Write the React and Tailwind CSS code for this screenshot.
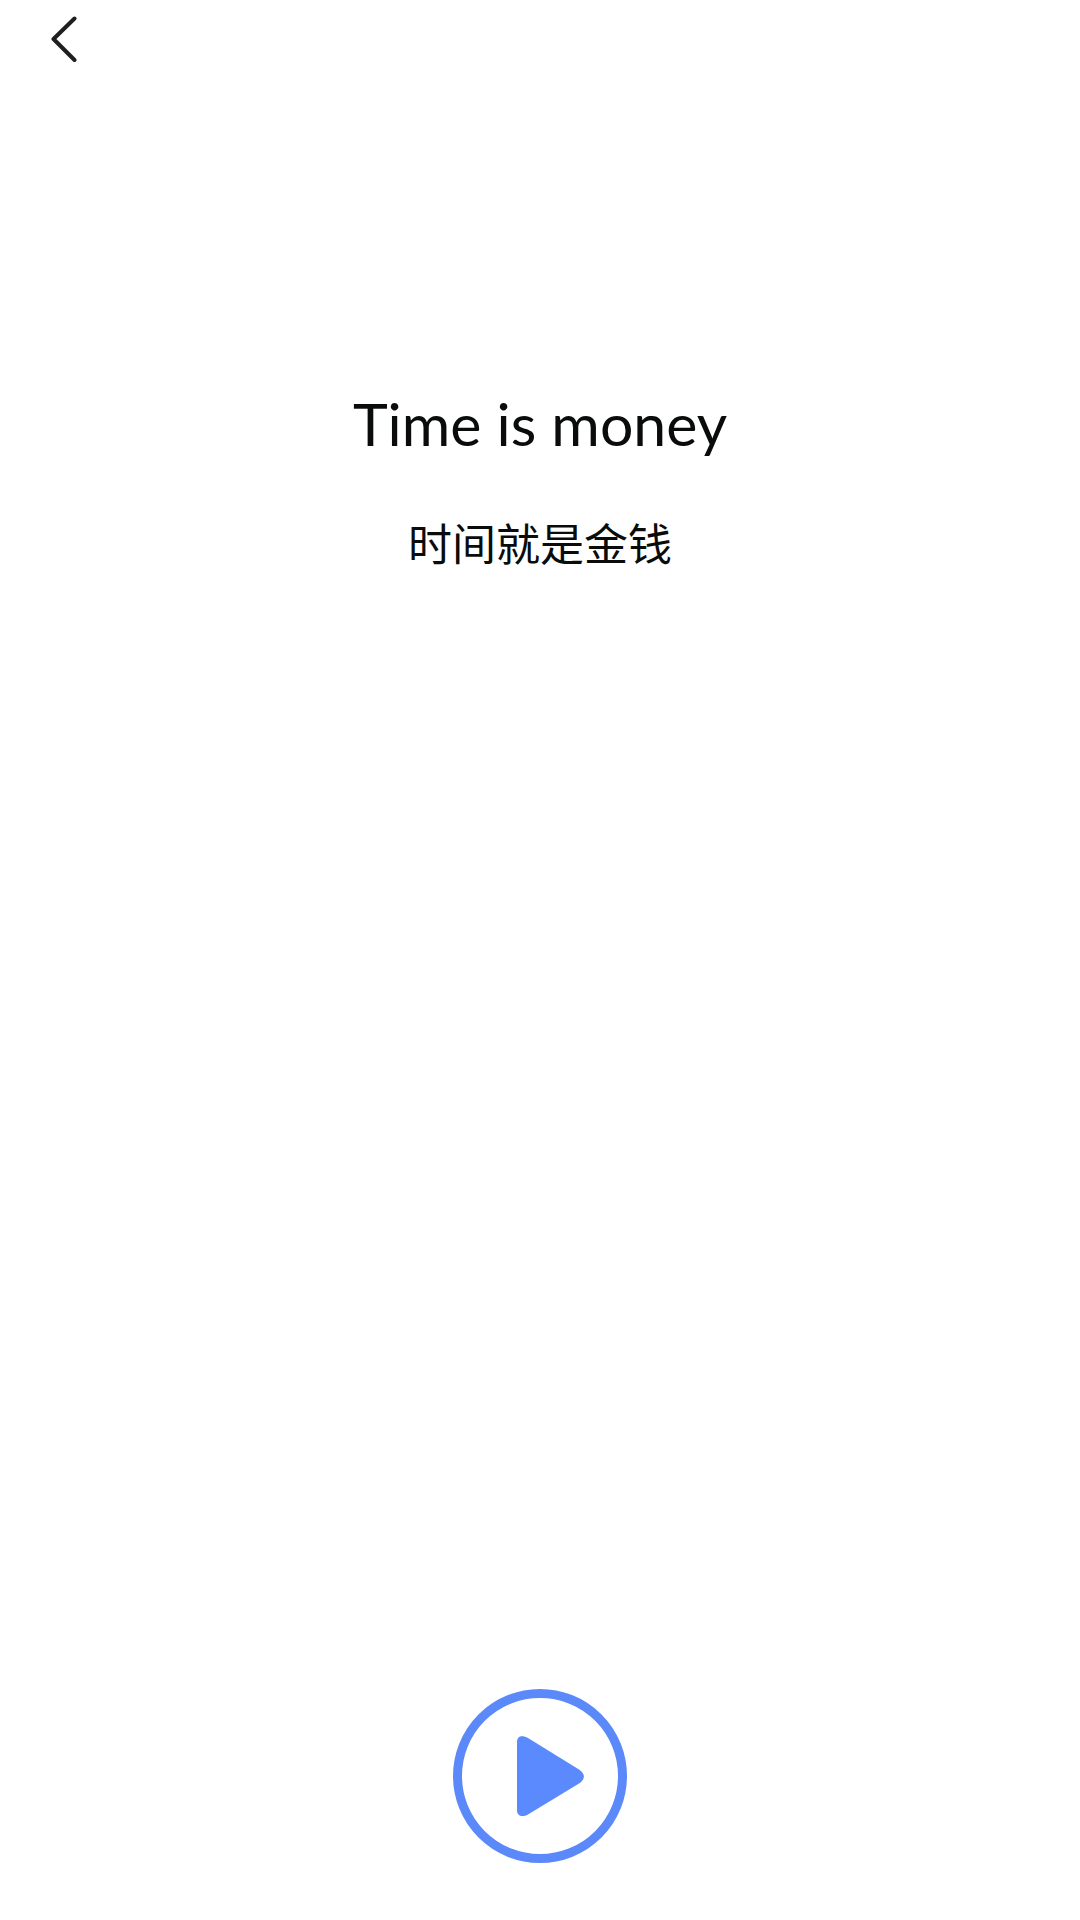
import React from 'react';

export default function App() {
    return (
        <main className="min-h-screen bg-white flex flex-col items-center text-[#0a0c0b] font-['Lato','Noto_Sans_CJK_SC',sans-serif]">
            <header className="w-full h-20 flex items-start px-10 pt-4">
                <button type="button" aria-label="返回" className="w-12 h-12">
                    <svg viewBox="0 0 48 48" fill="none" stroke="#1f1f1f" strokeWidth="4" strokeLinecap="round" strokeLinejoin="round">
                        <path d="M34.5 2.5 L13.5 23 L34.5 44" />
                    </svg>
                </button>
            </header>

            <section className="pt-76 flex-1 text-center">
                <h1 className="text-[59px] leading-20">Time is money</h1>
                <p lang="zh-CN" className="mt-[46px] text-[44px] leading-16 font-['Noto_Sans_CJK_SC',sans-serif]">时间就是金钱</p>
            </section>

            <button type="button" aria-label="播放" className="mb-[57px] w-[174px] h-[174px]">
                <svg viewBox="0 0 174 174">
                    <circle cx="87" cy="87" r="82.5" fill="none" stroke="#5b89fa" strokeWidth="9" />
                    <path
                        d="M64 53 C64 47 69 46 75 49 L126 80.5 C132.5 85 132.5 90 126 94.5 L75 125.5 C69 128.5 64 127 64 121 Z"
                        fill="#5b89fe"
                    />
                </svg>
            </button>
        </main>
    );
}
